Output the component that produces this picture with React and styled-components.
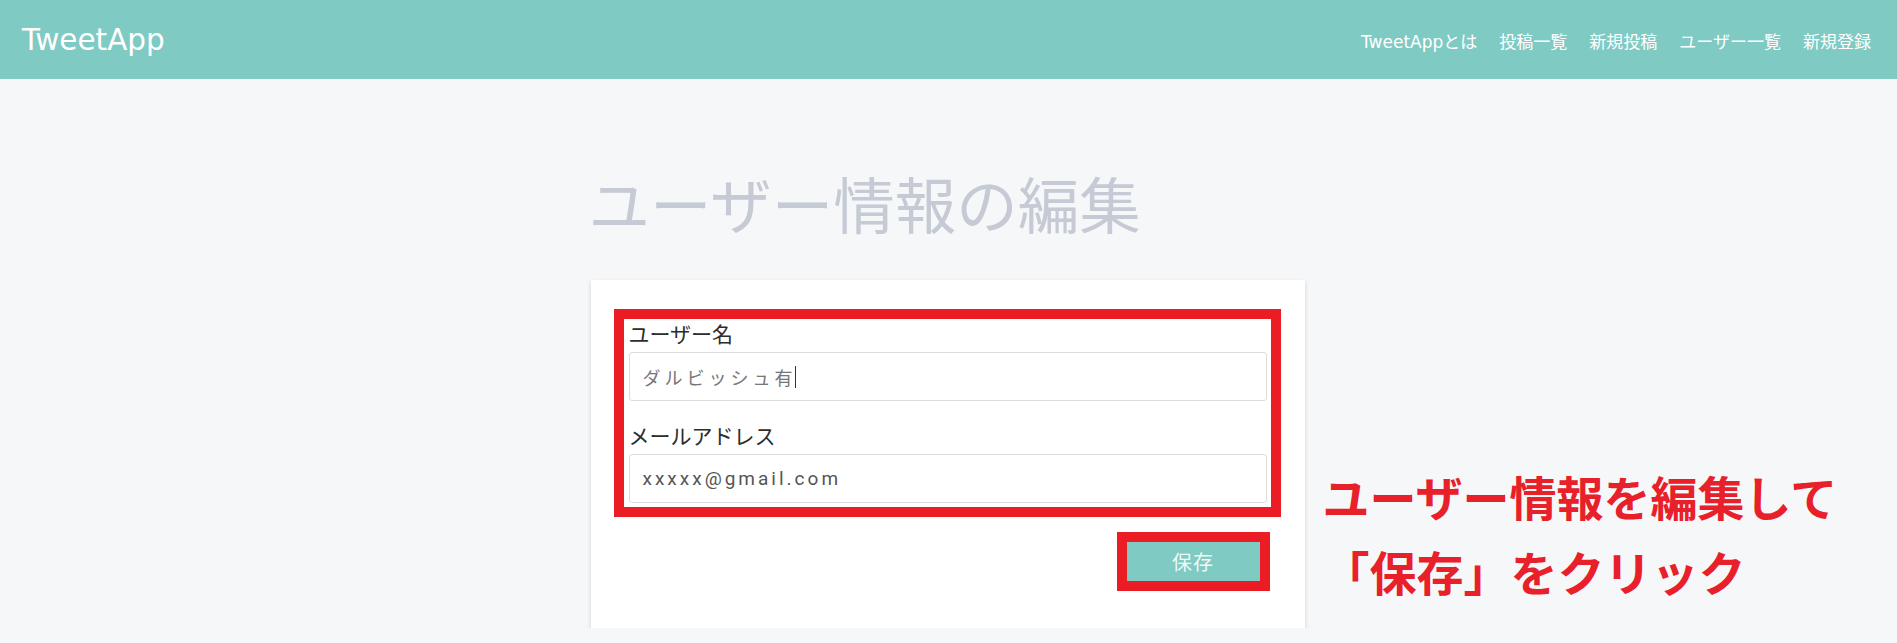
import styled, { createGlobalStyle } from 'styled-components';

const GlobalStyle = createGlobalStyle`
  html, body {
    margin: 0;
    padding: 0;
    background: #f5f7f9;
    overflow: hidden;
  }
  body {
    font-family: "DejaVu Sans", "Noto Sans CJK JP", sans-serif;
    color: #2d2d2d;
  }
  * {
    box-sizing: border-box;
  }
`;

const Header = styled.header`
  height: 79px;
  padding: 0 26px 0 22px;
  background: #7fcac3;
  display: flex;
  align-items: center;
  justify-content: space-between;
`;

const Logo = styled.div`
  font-size: 29.5px;
  color: #ffffff;
`;

const Nav = styled.nav`
  display: flex;
  gap: 22px;
  padding-top: 2px;
`;

const NavLink = styled.a`
  font-size: 17px;
  color: #ffffff;
  text-decoration: none;
  white-space: nowrap;
`;

const Main = styled.main`
  width: 716px;
  margin: 0 auto;
`;

const Title = styled.h1`
  margin: 88px 0 41px -2px;
  font-size: 61.5px;
  line-height: 72px;
  font-weight: 400;
  color: #c5cad4;
  font-family: "Noto Sans CJK JP", sans-serif;
  white-space: nowrap;
`;

const EditRow = styled.div`
  display: flex;
  align-items: flex-start;
`;

const Card = styled.div`
  flex: 0 0 714px;
  background: #ffffff;
  padding: 29px 24px 37px 23px;
  box-shadow: 0 2px 4px rgba(60, 70, 90, 0.22);
  display: flex;
  flex-direction: column;
`;

// 赤枠（スクリーンショット上の注釈）
const RedFrame = styled.div`
  border: 10px solid #ec1c24;
  padding: ${(p) => p.$pad || '0'};
`;

const Label = styled.div`
  font-family: "Noto Sans CJK JP", sans-serif;
  font-size: 21px;
  line-height: 27px;
  color: #2d2d2d;
  margin-bottom: 5px;
`;

const Field = styled.div`
  height: 49px;
  border: 1px solid #dcdcdc;
  border-radius: 3px;
  padding: 0 13px;
  display: flex;
  align-items: center;
  font-size: ${(p) => p.$size};
  letter-spacing: ${(p) => p.$spacing};
  color: ${(p) => p.$color};
  font-family: ${(p) => p.$font};
  margin-bottom: ${(p) => p.$bottom || '0'};
`;

const Caret = styled.span`
  display: inline-block;
  width: 1px;
  height: 22px;
  background: #333;
  margin-left: -2px;
`;

const ButtonRow = styled.div`
  display: flex;
  justify-content: flex-end;
  margin: 15px 11px 0 0;
`;

const SaveButton = styled.button`
  width: 133px;
  height: 39px;
  border: none;
  background: #7fcac3;
  color: #eef8f7;
  font-family: "Noto Sans CJK JP", sans-serif;
  font-size: 20px;
  letter-spacing: 1px;
  display: block;
  cursor: pointer;
`;

const Callout = styled.div`
  margin: 178px 0 0 18px;
  font-family: "Noto Sans CJK JP", sans-serif;
  font-weight: 700;
  font-size: 47px;
  line-height: 75px;
  color: #e8202a;
  white-space: nowrap;
  flex-shrink: 0;
`;

const navItems = ['TweetAppとは', '投稿一覧', '新規投稿', 'ユーザー一覧', '新規登録'];

export default function App() {
  return (
    <>
      <GlobalStyle />
      <Header>
        <Logo>TweetApp</Logo>
        <Nav>
          {navItems.map((item) => (
            <NavLink key={item} href="#">
              {item}
            </NavLink>
          ))}
        </Nav>
      </Header>
      <Main>
        <Title>ユーザー情報の編集</Title>
        <EditRow>
          <Card>
            <RedFrame $pad="1px 4px 4px 5px">
              <Label>ユーザー名</Label>
              <Field
                $size="18px"
                $spacing="4px"
                $color="#777"
                $font={'"Noto Sans CJK JP", sans-serif'}
                $bottom="21px"
              >
                ダルビッシュ有
                <Caret />
              </Field>
              <Label>メールアドレス</Label>
              <Field $size="19px" $spacing="3px" $color="#555" $font={'Roboto, sans-serif'}>
                xxxxx@gmail.com
              </Field>
            </RedFrame>
            <ButtonRow>
              <RedFrame>
                <SaveButton>保存</SaveButton>
              </RedFrame>
            </ButtonRow>
          </Card>
          <Callout>
            ユーザー情報を編集して
            <br />
            「保存」をクリック
          </Callout>
        </EditRow>
      </Main>
    </>
  );
}
